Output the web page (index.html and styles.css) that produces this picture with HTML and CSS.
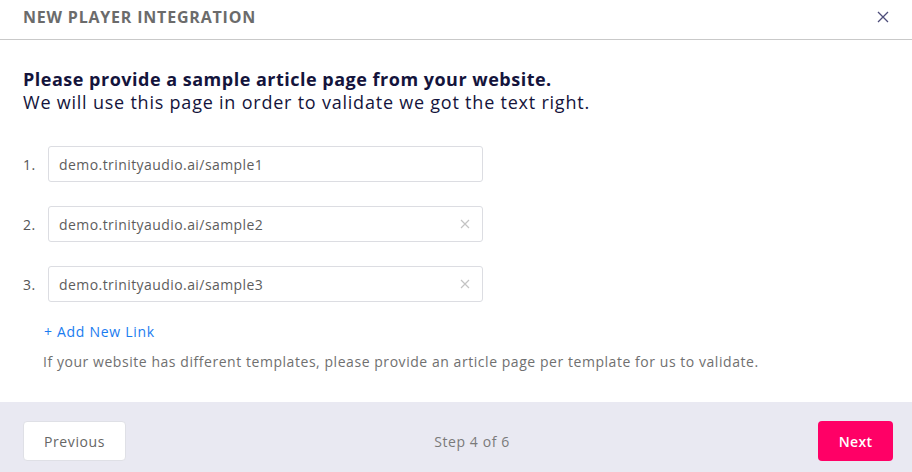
FILE: index.html
```html
<!DOCTYPE html>
<html>
<head>
<meta charset="utf-8">
<link rel="stylesheet" href="styles.css">
</head>
<body>
<div class="modal">
  <header class="head">
    <span class="title">NEW PLAYER INTEGRATION</span>
    <svg class="close" width="12" height="12" viewBox="0 0 12 12"><path d="M1 1L11 11M11 1L1 11" stroke="#4d4d7a" stroke-width="1.3" fill="none"/></svg>
  </header>
  <main class="body">
    <h1 class="lead"><b>Please provide a sample article page from your website.</b><br>We will use this page in order to validate we got the text right.</h1>
    <div class="rows">
      <div class="row"><span class="num">1.</span><div class="input"><span>demo.trinityaudio.ai/sample1</span></div></div>
      <div class="row"><span class="num">2.</span><div class="input"><span>demo.trinityaudio.ai/sample2</span><svg class="clear" width="10" height="10" viewBox="0 0 10 10"><path d="M1 1L9 9M9 1L1 9" stroke="#c4c4c4" stroke-width="1.2" fill="none"/></svg></div></div>
      <div class="row"><span class="num">3.</span><div class="input"><span>demo.trinityaudio.ai/sample3</span><svg class="clear" width="10" height="10" viewBox="0 0 10 10"><path d="M1 1L9 9M9 1L1 9" stroke="#c4c4c4" stroke-width="1.2" fill="none"/></svg></div></div>
    </div>
    <a class="add">+ Add New Link</a>
    <p class="help">If your website has different templates, please provide an article page per template for us to validate.</p>
  </main>
  <footer class="foot">
    <button class="btn prev">Previous</button>
    <span class="step">Step 4 of 6</span>
    <button class="btn next">Next</button>
  </footer>
</div>
</body>
</html>
```
FILE: styles.css
```css
* { box-sizing: border-box; }
html, body { margin: 0; padding: 0; background: #fff; }
body { font-family: "Open Sans", "DejaVu Sans", sans-serif; width: 912px; height: 472px; overflow: hidden; letter-spacing: 0.55px; }
.modal { display: flex; flex-direction: column; height: 472px; }
.head { height: 40px; border-bottom: 1px solid #c9c9c9; display: flex; align-items: center; justify-content: space-between; padding: 0 23px 6px 23px; }
.title { font-size: 16px; font-weight: 700; color: #6b6b6b; letter-spacing: 0.8px; }
.body { flex: 1; padding: 28px 23px 0 23px; }
.lead { margin: 0; font-size: 18px; font-weight: 400; line-height: 23px; color: #14143c; letter-spacing: 0.78px; }
.lead b { font-weight: 700; letter-spacing: 0.5px; }
.rows { margin-top: 32px; display: flex; flex-direction: column; gap: 24px; }
.row { display: flex; align-items: center; }
.num { width: 25px; font-size: 14px; color: #555; }
.input { width: 435px; height: 36px; border: 1px solid #dcdde2; border-radius: 3px; display: flex; align-items: center; justify-content: space-between; padding: 0 12px 0 10px; font-size: 14px; color: #5d5d5d; letter-spacing: 0.43px; }
.add { display: block; margin: 21px 0 0 21px; font-size: 14px; color: #1a7cf0; line-height: 18px; letter-spacing: 0.7px; }
.help { margin: 12px 0 0 20px; font-size: 14px; color: #707070; line-height: 18px; }
.foot { height: 70px; background: #e9e9f2; display: flex; align-items: center; justify-content: space-between; padding: 8px 19px 0 23px; }
.btn { font-family: inherit; font-size: 14px; height: 40px; border-radius: 4px; border: none; letter-spacing: 0.6px; }
.prev { width: 103px; background: #fff; color: #666; border: 1px solid #dfe0e6; }
.next { width: 75px; background: #ff0066; color: #fff; font-weight: 600; letter-spacing: 0.3px; }
.step { font-size: 14px; color: #7a7a7a; margin-left: 0; letter-spacing: 0.6px; }
```
